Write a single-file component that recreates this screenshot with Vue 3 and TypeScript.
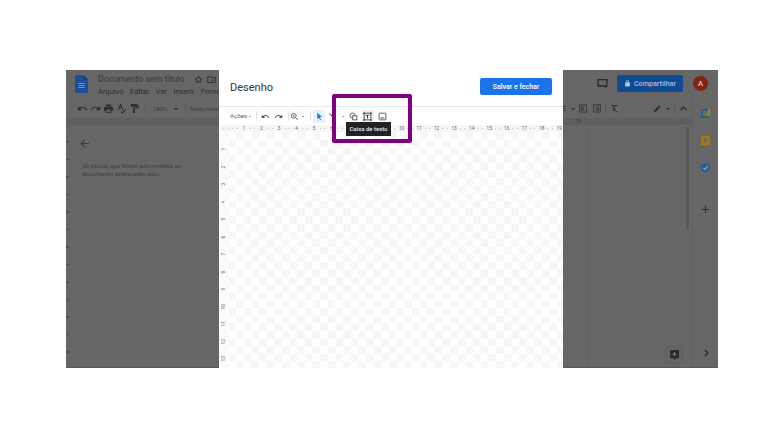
<script setup lang="ts">
const menus = ["Arquivo", "Editar", "Ver", "Inserir", "Format"];
const hRuler = Array.from({ length: 19 }, (_, i) => i + 1);
const vRuler = Array.from({ length: 13 }, (_, i) => i + 1);
</script>

<template>
  <div class="page">
    <div class="docs">
      <header class="docs-head">
        <svg class="doc-logo" viewBox="0 0 13 18" width="13" height="18">
          <path d="M1.500 0H8.500L13 4.500V16.500A1.500 1.500 0 0 1 11.500 18H1.500A1.500 1.500 0 0 1 0 16.500V1.500A1.500 1.500 0 0 1 1.500 0z" fill="#1c4f99" />
          <path d="M8.500 0L13 4.500H8.500z" fill="#153a72" />
          <path d="M3.500 8.500h6M3.500 10.500h6M3.500 12.500h6" stroke="#7b90b3" stroke-width="1" />
        </svg>
        <div class="doc-titles">
          <div class="doc-title">
            <span>Documento sem título</span>
            <svg viewBox="0 0 24 24" width="9" height="9"><path d="M12 3l2.700 6.100 6.600.6-5 4.400 1.500 6.500L12 17.200 6.200 20.600l1.500-6.500-5-4.400 6.600-.6z" fill="none" stroke="#2c2c2c" stroke-width="2.400" /></svg>
            <svg viewBox="0 0 24 24" width="9" height="9"><path d="M2 5h8l2 2h10v13H2z" fill="none" stroke="#2c2c2c" stroke-width="2.400" /><path d="M9 14h6M13 11l3 3-3 3" fill="none" stroke="#2c2c2c" stroke-width="2" /></svg>
          </div>
          <nav class="doc-menu">
            <span v-for="m in menus" :key="m">{{ m }}</span>
          </nav>
        </div>
        <div class="top-actions">
          <svg viewBox="0 0 24 24" width="11" height="11"><path d="M1 2h22v17h-3v4l-4-4H1zm3 3v11h16V5z" fill="#2a2a2a" /></svg>
          <button class="share">
            <svg viewBox="0 0 24 24" width="7" height="7"><path d="M18 8h-1V6a5 5 0 0 0-10 0v2H6a2 2 0 0 0-2 2v10a2 2 0 0 0 2 2h12a2 2 0 0 0 2-2V10a2 2 0 0 0-2-2zM9 6a3 3 0 0 1 6 0v2H9z" fill="#b4c4dd" /></svg>
            Compartilhar
          </button>
          <span class="avatar">A</span>
        </div>
      </header>

      <div class="docs-content">
        <div class="docs-main">
          <div class="docs-tools">
            <svg viewBox="0 0 24 24" width="11" height="11"><path d="M12.500 8c-2.600 0-5 1-6.900 2.600L2 7v9h9l-3.600-3.600c1.400-1.200 3.200-1.900 5.100-1.900 3.500 0 6.500 2.300 7.600 5.500l2.400-.8C21 11.900 17.100 8 12.500 8z" fill="#2c2c2c" /></svg>
            <svg viewBox="0 0 24 24" width="11" height="11"><path d="M11.500 8c2.600 0 5 1 6.900 2.600L22 7v9h-9l3.600-3.600c-1.400-1.200-3.200-1.900-5.100-1.900-3.500 0-6.500 2.300-7.600 5.500l-2.400-.8C3 11.900 6.900 8 11.500 8z" fill="#2c2c2c" /></svg>
            <svg viewBox="0 0 24 24" width="11" height="11"><path d="M19 8H5a3 3 0 0 0-3 3v6h4v4h12v-4h4v-6a3 3 0 0 0-3-3zm-3 11H8v-5h8zM18 3H6v4h12z" fill="#2c2c2c" /></svg>
            <svg viewBox="0 0 24 24" width="11" height="11"><path d="M5 15L10 3l5 12M7 11h6M11 19l3 3 7-8" fill="none" stroke="#2c2c2c" stroke-width="2.200" /></svg>
            <svg viewBox="0 0 24 24" width="11" height="11"><path d="M18 4V3a1 1 0 0 0-1-1H5a1 1 0 0 0-1 1v4a1 1 0 0 0 1 1h12a1 1 0 0 0 1-1V6h1v4H9v11a1 1 0 0 0 1 1h2a1 1 0 0 0 1-1v-9h8V4z" fill="#2c2c2c" /></svg>
            <i class="tool-sep"></i>
            <span class="tool-text zoom-val">100%</span>
            <span class="tool-caret"></span>
            <i class="tool-sep"></i>
            <span class="tool-text">Texto norm.</span>
            <div class="tools-right">
              <svg viewBox="0 0 24 24" width="9" height="11"><path d="M4 5h2v2H4zM9 5h11v2H9zM4 11h2v2H4zM9 11h11v2H9zM4 17h2v2H4zM9 17h11v2H9z" fill="#2c2c2c" /></svg>
              <span class="tool-caret"></span>
              <svg viewBox="0 0 20 24" width="8" height="11"><path d="M1 3h18v18H1z" fill="none" stroke="#2c2c2c" stroke-width="2" /><path d="M4 8h9M4 12h9M4 16h9" stroke="#2c2c2c" stroke-width="2" /></svg>
              <svg class="push" viewBox="0 0 20 24" width="8" height="11"><path d="M1 3h18v18H1z" fill="none" stroke="#2c2c2c" stroke-width="2" /><path d="M7 8h9M7 12h9M7 16h9" stroke="#2c2c2c" stroke-width="2" /></svg>
              <i class="right-sep"></i>
              <svg viewBox="0 0 24 24" width="9" height="11"><path d="M4 4h17M13 4l-4 16M5 8l14 13" fill="none" stroke="#2c2c2c" stroke-width="2.600" /></svg>
              <svg class="pen" viewBox="0 0 24 24" width="9" height="11"><path d="M3 21l1-5L16 4l4 4L8 20z" fill="#2c2c2c" /></svg>
              <span class="tool-caret"></span>
              <i class="right-sep"></i>
              <svg viewBox="0 0 24 24" width="9" height="11"><path d="M4 16l8-8 8 8" fill="none" stroke="#2c2c2c" stroke-width="3" /></svg>
            </div>
          </div>
          <div class="band"><span>18</span></div>
          <div class="docs-body">
            <aside class="outline">
              <svg viewBox="0 0 24 24" width="13" height="13"><path d="M20 11H7.800l5.600-5.600L12 4l-8 8 8 8 1.400-1.400L7.800 13H20z" fill="#3a3a3a" /></svg>
              <p>Os títulos que forem adicionados ao documento aparecerão aqui.</p>
            </aside>
            <div class="gutter">
              <div class="doc-scroll"></div>
              <div class="add-note">
                <svg viewBox="0 0 14 16" width="9" height="10"><path d="M0 0h14v13H9l-2 3-2-3H0z" fill="#2a2a2a" /><path d="M7 3.500v6M4 6.500h6" stroke="#7d7d7d" stroke-width="2" /></svg>
              </div>
            </div>
          </div>
        </div>
        <aside class="side-icons">
          <svg viewBox="0 0 14 14" width="9" height="9"><rect width="14" height="14" rx="1" fill="#1d5fa8" /><rect x="11" width="3" height="11" fill="#a68a12" /><rect y="11" width="11" height="3" fill="#1a7a3e" /><rect x="3" y="3" width="8" height="8" fill="#6d6d6d" /></svg>
          <svg viewBox="0 0 14 14" width="9" height="9"><rect width="14" height="14" rx="1" fill="#a37d06" /><circle cx="7" cy="6" r="3" fill="#6a6a6a" /><rect x="5.500" y="9" width="3" height="2" fill="#6a6a6a" /></svg>
          <svg viewBox="0 0 14 14" width="9" height="9"><circle cx="7" cy="7" r="7" fill="#1d5fa8" /><path d="M3.500 7.500l2.500 2.500 5-5.500" fill="none" stroke="#b9a22d" stroke-width="1.800" /></svg>
          <i class="side-line"></i>
          <svg viewBox="0 0 12 12" width="7" height="7"><path d="M6 0v12M0 6h12" stroke="#2e2e2e" stroke-width="1.800" /></svg>
          <svg class="side-chevron" viewBox="0 0 12 12" width="8" height="8"><path d="M4 1l5 5-5 5" fill="none" stroke="#2a2a2a" stroke-width="2" /></svg>
        </aside>
      </div>

      <section class="dialog">
        <header class="dialog-head">
          <h1>Desenho</h1>
          <button class="save">Salvar e fechar</button>
        </header>
        <div class="toolbar">
          <span class="acoes">Ações <i class="caret"></i></span>
          <i class="sep after-acoes"></i>
          <svg class="ico" viewBox="0 0 24 24"><path d="M12.500 8c-2.600 0-5 1-6.900 2.600L2 7v9h9l-3.600-3.600c1.400-1.200 3.200-1.900 5.100-1.900 3.500 0 6.500 2.300 7.600 5.500l2.400-.8C21 11.900 17.100 8 12.500 8z" fill="#555" /></svg>
          <svg class="ico" viewBox="0 0 24 24"><path d="M11.500 8c2.600 0 5 1 6.900 2.600L22 7v9h-9l3.600-3.600c-1.400-1.200-3.200-1.900-5.100-1.900-3.500 0-6.500 2.300-7.600 5.500l-2.400-.8C3 11.900 6.900 8 11.500 8z" fill="#555" /></svg>
          <i class="sep after-redo"></i>
          <svg class="ico zoom" viewBox="0 0 24 24"><circle cx="10" cy="10" r="6.500" fill="none" stroke="#555" stroke-width="2.200" /><path d="M15 15l6 6" stroke="#555" stroke-width="2.500" /><path d="M10 7v6M7 10h6" stroke="#555" stroke-width="1.600" /></svg>
          <i class="caret zoom-caret"></i>
          <i class="sep after-zoom"></i>
          <span class="select-on">
            <svg class="ico" viewBox="0 0 24 24"><path d="M6 2v17l4.500-4.500 3 7 2.500-1-3-7H19z" fill="#1a73e8" /></svg>
          </span>
          <svg class="ico line-tool" viewBox="0 0 24 24"><path d="M4 4l16 16" stroke="#444" stroke-width="2.800" /></svg>
          <i class="caret line-caret"></i>
          <svg class="ico shape" viewBox="0 0 24 24"><circle cx="9.500" cy="9.500" r="7" fill="none" stroke="#444" stroke-width="2.200" /><rect x="10" y="10" width="11" height="11" fill="#fff" stroke="#444" stroke-width="2.200" /></svg>
          <span class="text-on">
            <svg class="ico" viewBox="0 0 24 24"><path d="M3 3h18v18H3z" fill="none" stroke="#333" stroke-width="2" /><path d="M1 1h4v4H1zM19 1h4v4h-4zM1 19h4v4H1zM19 19h4v4h-4z" fill="#333" /><path d="M7 7h10v2.500h-3.700V17h-2.600V9.500H7z" fill="#333" /></svg>
          </span>
          <svg class="ico image" viewBox="0 0 24 24"><rect x="3" y="3" width="18" height="18" rx="1.500" fill="none" stroke="#444" stroke-width="2.200" /><path d="M6 17l4-4 3 3 2-2 3 3z" fill="#444" /></svg>
        </div>
        <div class="h-ruler">
          <span v-for="n in hRuler" :key="n"><b>{{ n }}</b></span>
        </div>
        <div class="canvas-row">
          <div class="v-ruler">
            <span v-for="n in vRuler" :key="n">{{ n }}</span>
          </div>
          <div class="canvas"></div>
        </div>
        <div class="tooltip">Caixa de texto</div>
      </section>
      <div class="highlight"></div>
    </div>
  </div>
</template>

<style>
html,
body {
  margin: 0;
  background: #fff;
}
</style>

<style scoped>
.page {
  width: 782px;
  height: 440px;
  padding: 70px 64px 72px 66px;
  box-sizing: border-box;
  overflow: hidden;
  background: #fff;
  font-family: "Roboto", "Liberation Sans", sans-serif;
}
.docs {
  position: relative;
  display: flex;
  flex-direction: column;
  width: 652px;
  height: 298px;
  box-sizing: border-box;
  background: #666;
  color: #2b2b2b;
  border-bottom: 1px solid #575757;
}
.docs-head {
  height: 29px;
  flex: none;
  box-sizing: border-box;
  padding: 5px 10px 0 9px;
  display: flex;
  gap: 10px;
}
.doc-titles {
  white-space: nowrap;
}
.doc-title {
  display: flex;
  align-items: center;
  height: 10px;
  margin-top: -1px;
  font-size: 8.800px;
  line-height: 10px;
  color: #3a3a3a;
}
.doc-title svg {
  margin-left: 4px;
}
.doc-title svg:first-of-type {
  margin-left: 9px;
}
.doc-menu {
  display: flex;
  gap: 6.500px;
  margin-top: 3px;
  font-size: 7.500px;
  line-height: 9px;
  color: #2d2d2d;
}
.top-actions {
  margin-left: auto;
  display: flex;
  align-items: center;
  gap: 9px;
  height: 17px;
}
.share {
  display: flex;
  align-items: center;
  justify-content: center;
  gap: 3px;
  width: 66px;
  height: 17px;
  padding: 0;
  border: 0;
  border-radius: 2px;
  background: #0f4a93;
  color: #a9bcd8;
  font: 500 7.200px "Roboto", sans-serif;
}
.avatar {
  width: 15px;
  height: 15px;
  margin-left: 1px;
  border-radius: 50%;
  background: #84240f;
  color: #d9c5c0;
  font: 500 8px/15px "Roboto", sans-serif;
  text-align: center;
}
.docs-content {
  flex: 1;
  min-height: 0;
  display: flex;
}
.docs-main {
  flex: 1;
  min-width: 0;
  display: flex;
  flex-direction: column;
}
.docs-tools {
  height: 19px;
  flex: none;
  padding-left: 11px;
  display: flex;
  align-items: center;
  gap: 2px;
}
.tool-sep {
  width: 1px;
  height: 11px;
  margin: 0 2px 0 3px;
  background: #5a5a5a;
}
.tool-text {
  font-size: 6px;
  color: #3a3a3a;
  white-space: nowrap;
}
.zoom-val {
  margin: 0 4px 0 3px;
}
.tool-caret {
  flex: none;
  width: 0;
  height: 0;
  border: 2px solid transparent;
  border-top-color: #2c2c2c;
  border-bottom: 0;
  margin-right: 2px;
}
.tools-right {
  margin-left: auto;
  padding-right: 4.500px;
  display: flex;
  align-items: center;
  gap: 4px;
}
.tools-right .tool-caret {
  margin-right: 0;
}
.push {
  margin-left: 2px;
}
.right-sep {
  width: 1px;
  height: 11px;
  background: #5a5a5a;
}
.pen {
  margin-left: 30px;
}
.band {
  height: 7px;
  flex: none;
  padding-left: 509px;
  background: #5f5f5f;
  font-size: 5px;
  line-height: 7px;
  color: #3a3a3a;
}
.docs-body {
  flex: 1;
  min-height: 0;
  display: flex;
  padding-left: 4px;
  background-image: repeating-linear-gradient(#666 0 16px, #4f4f4f 16px 17.530px);
  background-size: 3px 100%;
  background-repeat: no-repeat;
  background-color: #666;
}
.outline {
  width: 518px;
  flex: none;
  box-sizing: border-box;
  padding: 12px 0 0 8px;
  background: #666;
  border-right: 1px solid #5f5f5f;
}
.outline svg {
  display: block;
}
.outline p {
  width: 110px;
  margin: 12px 0 0 4px;
  font-size: 6.200px;
  line-height: 8px;
  color: #3f3f3f;
}
.gutter {
  flex: 1;
  position: relative;
}
.doc-scroll {
  position: absolute;
  top: 2px;
  right: 3px;
  width: 3px;
  height: 103px;
  background: #585858;
}
.add-note {
  position: absolute;
  right: 9px;
  bottom: 3px;
  display: flex;
  justify-content: center;
  align-items: center;
  width: 17px;
  height: 18px;
  border: 1px solid #5e5e5e;
  border-radius: 2px;
  box-sizing: border-box;
}
.side-icons {
  width: 26px;
  flex: none;
  box-sizing: border-box;
  padding: 9.500px 0 10px;
  border-left: 1px solid #5f5f5f;
  display: flex;
  flex-direction: column;
  align-items: center;
  gap: 18px;
}
.side-line {
  width: 11px;
  height: 1px;
  margin-top: -3px;
  background: #616161;
}
.side-chevron {
  margin-top: auto;
}
.dialog {
  position: absolute;
  top: 0;
  left: 153px;
  width: 344px;
  height: 298px;
  background: #fff;
  display: flex;
  flex-direction: column;
}
.dialog-head {
  height: 37px;
  flex: none;
  box-sizing: border-box;
  padding: 8px 11px 0;
  display: flex;
  justify-content: space-between;
  align-items: flex-start;
  border-bottom: 1px solid #e9e9e9;
}
.dialog-head h1 {
  margin: 2px 0 0;
  font-size: 11px;
  line-height: 15px;
  font-weight: 400;
  color: #333;
}
.save {
  width: 72px;
  height: 17px;
  padding: 0;
  border: 0;
  border-radius: 2px;
  background: #1a73e8;
  color: #fff;
  font: 500 7px "Roboto", sans-serif;
}
.toolbar {
  height: 18px;
  flex: none;
  padding-left: 11px;
  display: flex;
  align-items: center;
  gap: 4px;
}
.acoes {
  display: flex;
  align-items: center;
  gap: 1.500px;
  font-size: 6.200px;
  color: #666;
}
.caret {
  flex: none;
  width: 0;
  height: 0;
  border: 1.500px solid transparent;
  border-top-color: #555;
  border-bottom: 0;
}
.sep {
  flex: none;
  width: 1px;
  height: 10px;
  background: #e3e3e3;
}
.ico {
  width: 9px;
  height: 9px;
  flex: none;
}
.after-acoes {
  margin-left: 1px;
}
.after-redo {
  margin-left: 1px;
}
.zoom {
  margin-left: -3px;
}
.zoom-caret {
  margin-left: -1px;
}
.after-zoom {
  margin-left: 2px;
  margin-right: -1.500px;
}
.select-on {
  flex: none;
  display: flex;
  align-items: center;
  justify-content: center;
  width: 12px;
  height: 13px;
  background: #e8f0fe;
  border-radius: 1px;
}
.line-tool {
  margin-left: -1.500px;
}
.line-caret {
  margin-left: 1px;
}
.shape {
  margin-left: 1px;
}
.text-on {
  flex: none;
  display: flex;
  align-items: center;
  justify-content: center;
  width: 12px;
  height: 12px;
  margin-left: 0;
  background: #eee;
  border-radius: 1px;
}
.image {
  margin-left: .5px;
}
.h-ruler {
  height: 7px;
  flex: none;
  margin-left: 1px;
  padding-left: 15.200px;
  display: flex;
  background-color: #f6f6f6;
  background-image: repeating-linear-gradient(90deg, transparent 0 3.380px, #c4c4c4 3.380px 4.380px);
  background-size: 100% 1px;
  background-position: 0 3px;
  background-repeat: no-repeat;
  font-size: 4.800px;
  line-height: 7px;
  color: #666;
}
.h-ruler span {
  flex: none;
  width: 17.530px;
  text-align: center;
}
.h-ruler b {
  display: inline-block;
  padding: 0 1.500px;
  background: #f6f6f6;
  font-weight: 400;
}
.canvas-row {
  flex: 1;
  min-height: 0;
  display: flex;
}
.v-ruler {
  width: 7px;
  flex: none;
  margin-left: 1px;
  padding-top: 8.200px;
  box-sizing: border-box;
  background-color: #fafafa;
  display: flex;
  flex-direction: column;
  font-size: 4.800px;
  color: #666;
  overflow: hidden;
}
.v-ruler span {
  flex: none;
  height: 17.530px;
  display: flex;
  align-items: center;
  justify-content: center;
  writing-mode: vertical-rl;
  transform: rotate(180deg);
}
.canvas {
  flex: 1;
  background-color: #fff;
  background-image: conic-gradient(#f6f6f6 25%, #fff 0 50%, #f6f6f6 0 75%, #fff 0);
  background-size: 15.300px 15.300px;
  background-position: 1.400px 0;
}
.tooltip {
  position: absolute;
  top: 52px;
  left: 127px;
  width: 45px;
  height: 14px;
  background: #222;
  color: #eee;
  font-size: 6px;
  font-weight: 500;
  line-height: 14px;
  text-align: center;
}
.highlight {
  position: absolute;
  left: 266px;
  top: 24px;
  width: 80px;
  height: 49px;
  box-sizing: border-box;
  border: 4px solid #800080;
  border-radius: 2px;
}
</style>
